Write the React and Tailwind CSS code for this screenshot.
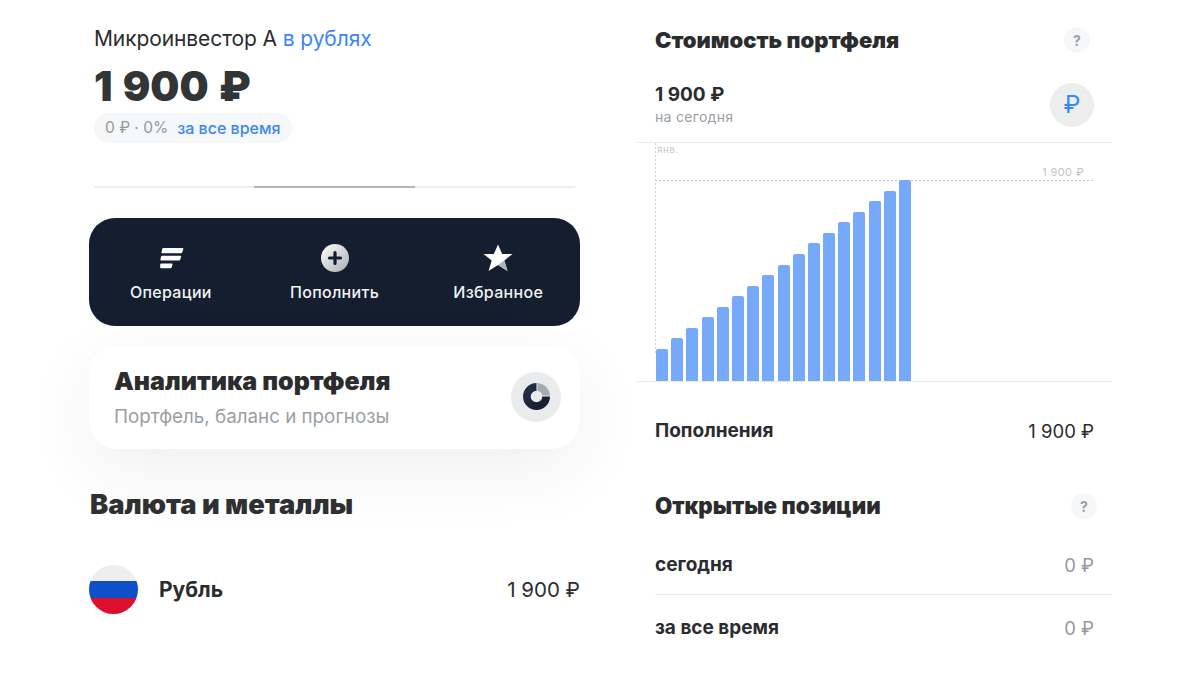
import React from 'react';

const bars = Array.from({ length: 17 }, (_, i) => 32 + i * 10.56);

function OpsIcon() {
  return (
    <svg width="24" height="24" viewBox="0 0 24 24" className="translate-x-[1px] translate-y-[1px]">
      <path d="M3.4 1H22.6Q23.6 1 23.3 2L22.3 5.2Q22 6.2 21 6.2H2.2Q1.2 6.2 1.5 5.2L2.2 2Q2.4 1 3.4 1Z" fill="#fff" />
      <path d="M2.2 8.8H20.4Q21.4 8.8 21.1 9.8L20.3 12.6Q20 13.6 19 13.6H1.2Q.2 13.6 .4 12.6L1 9.8Q1.2 8.8 2.2 8.8Z" fill="#fff" />
      <path d="M1.2 16.4H11.8Q12.8 16.4 12.5 17.4L11.7 20.2Q11.4 21.2 10.4 21.2H1Q0 21.2 .2 20.2L.2 17.6Q.3 16.4 1.2 16.4Z" fill="#fff" />
    </svg>
  );
}

function PlusIcon() {
  return (
    <svg width="28" height="28" viewBox="0 0 28 28">
      <defs>
        <linearGradient id="plusFill" x1="0" y1="0" x2="1" y2="1">
          <stop offset="0" stopColor="#ffffff" />
          <stop offset="1" stopColor="#a9adb3" />
        </linearGradient>
      </defs>
      <circle cx="14" cy="14" r="14" fill="url(#plusFill)" />
      <path d="M14 8.5V19.5M8.5 14H19.5" stroke="#141e2e" strokeWidth="3.2" strokeLinecap="round" />
    </svg>
  );
}

function StarIcon() {
  return (
    <svg width="30" height="28" viewBox="0 0 30 28">
      <path d="M15 .5L19.2 10H29.5L21.3 16.6L24.5 27L15 21L5.5 27L8.7 16.6L.5 10H10.8Z" fill="#fff" />
      <path d="M21.3 16.6L24.5 27L15 21Z" fill="#aeb2b8" />
    </svg>
  );
}

function DonutIcon() {
  return (
    <svg width="27" height="27" viewBox="0 0 28 28">
      <defs>
        <linearGradient id="donutFill" x1="0" y1="0" x2="1" y2="1">
          <stop offset="0" stopColor="#26344a" />
          <stop offset="1" stopColor="#121b2a" />
        </linearGradient>
      </defs>
      <path d="M15 0A14 14 0 0 1 28 13H20A6 6 0 0 0 15 8Z" fill="#a5abb1" />
      <path d="M14 0V8A6 6 0 1 0 20 14H28A14 14 0 1 1 14 0Z" fill="url(#donutFill)" />
    </svg>
  );
}

function Help({ className }) {
  return (
    <div className={`w-[26px] h-[26px] rounded-full bg-[#f6f7f8] flex items-center justify-center text-[14px] font-bold text-[#9a9ea5] ${className || ''}`}>?</div>
  );
}

function Action({ icon, label }) {
  return (
    <div className="flex flex-col items-center w-[164px]">
      <div className="h-[30px] flex items-center justify-center">{icon}</div>
      <div className="mt-[9px] text-[16px] leading-[20px] tracking-[0.3px] font-medium text-[#f1f2f4]">{label}</div>
    </div>
  );
}

function Row({ label, value, valueClass, className }) {
  return (
    <div className={`flex items-center justify-between ${className || ''}`}>
      <span className="text-[19px] leading-[24px] font-bold text-[#2b2c2e]">{label}</span>
      <span className={`text-[18.5px] leading-[24px] ${valueClass}`}>{value}</span>
    </div>
  );
}

export default function App() {
  return (
    <div className="w-[1200px] h-[675px] overflow-hidden bg-white flex font-['Inter',sans-serif] text-[#2b2c2e]">
      {/* left column */}
      <div className="w-[491px] ml-[89px] pt-[26px] flex flex-col">
        <div className="pl-[5px] text-[21px] leading-[26px] tracking-[-0.1px]">
          Микроинвестор А <span className="text-[#3d85f5]">в рублях</span>
        </div>
        <div className="pl-[5px] mt-[8px] text-[41px] leading-[52px] font-black text-[#333436] [word-spacing:2px]">1 900 ₽</div>
        <div className="ml-[5px] mt-[1px] w-[198px] h-[30px] rounded-full bg-[#f6f7f8] flex items-center pl-[11px] text-[15.5px]">
          <span className="text-[#94989e]">0 ₽ · 0%</span>
          <span className="ml-[9px] font-medium text-[#3d85f5] text-[16px]">за все время</span>
        </div>
        <div className="ml-[5px] mt-[43px] w-[481px] h-[2px] bg-[#efefef] flex">
          <div className="ml-[160px] w-[161px] bg-[#b5b6b8]"></div>
        </div>
        <div className="mt-[30px] h-[108px] rounded-[26px] bg-[#141e2e] flex justify-between pt-[25px]">
          <Action icon={<OpsIcon />} label="Операции" />
          <Action icon={<PlusIcon />} label="Пополнить" />
          <Action icon={<StarIcon />} label="Избранное" />
        </div>
        <div className="mt-[20px] h-[103px] rounded-[28px] bg-white shadow-[0_20px_70px_rgba(0,0,0,0.065)] flex items-center justify-between pl-[25px] pr-[19px]">
          <div>
            <div className="text-[25px] leading-[30px] font-black text-[#2b2c2e]">Аналитика портфеля</div>
            <div className="mt-[9px] text-[18.8px] leading-[24px] text-[#9a9ea5]">Портфель, баланс и прогнозы</div>
          </div>
          <div className="w-[50px] h-[50px] rounded-full bg-[#eaebed] flex items-center justify-center -translate-y-[1px]">
            <DonutIcon />
          </div>
        </div>
        <div className="relative mt-[39px] pl-[1px] text-[27.3px] leading-[34px] font-black text-[#2f3032]">Валюта и металлы</div>
        <div className="relative mt-[43px] flex items-center justify-between">
          <div className="flex items-center">
            <div className="w-[49px] h-[49px] rounded-full overflow-hidden flex flex-col">
              <div className="h-[16px] bg-[#eeeeef]"></div>
              <div className="h-[17px] bg-[#0f4fc9]"></div>
              <div className="h-[16px] bg-[#dd0f2d]"></div>
            </div>
            <span className="ml-[21px] text-[21px] leading-[26px] font-bold">Рубль</span>
          </div>
          <span className="text-[20.5px] leading-[26px]">1 900 ₽</span>
        </div>
      </div>

      {/* right column */}
      <div className="w-[475px] ml-[57px] flex flex-col">
        <div className="h-[80px] pt-[26px] pl-[18px] pr-[22px] flex items-start justify-between">
          <span className="text-[22px] leading-[28px] font-black">Стоимость портфеля</span>
          <Help className="mt-[1px]" />
        </div>
        <div className="h-[63px] pl-[18px] pr-[18px] flex justify-between border-b border-[#e9eaec]">
          <div>
            <div className="mt-[3px] text-[19px] leading-[24px] font-bold">1 900 ₽</div>
            <div className="mt-[1px] text-[14px] leading-[18px] tracking-[0.3px] text-[#9a9ea5]">на сегодня</div>
          </div>
          <div className="mt-[3px] w-[44px] h-[44px] rounded-full bg-[#eceded] flex items-center justify-center text-[24px] font-normal text-[#3d85f5]">₽</div>
        </div>
        <div className="relative h-[239px] border-b border-[#e9eaec]">
          <div className="absolute left-[18px] top-0 h-[210px] w-[1px] bg-[repeating-linear-gradient(180deg,#d4d5d7_0_2px,transparent_2px_4px)]"></div>
          <div className="absolute left-[18px] top-[37px] w-[439px] h-[1px] bg-[repeating-linear-gradient(90deg,#c4c5c7_0_2px,transparent_2px_4px)]"></div>
          <div className="absolute left-[20px] top-[0px] text-[10px] leading-[12px] tracking-[0.4px] text-[#c9cacc]">янв.</div>
          <div className="absolute right-[28px] top-[22px] text-[11px] leading-[14px] tracking-[0.4px] text-[#c4c5c7]">1 900 ₽</div>
          <div className="relative h-full pl-[19px] flex items-end gap-[3.2px]">
            {bars.map((h, i) => (
              <div key={i} className="w-[12px] bg-[#76a9fa] rounded-t-[2px]" style={{ height: h }}></div>
            ))}
          </div>
        </div>
        <Row className="mt-[37px] pl-[18px] pr-[18px]" label="Пополнения" value="1 900 ₽" valueClass="text-[#2b2c2e]" />
        <div className="mt-[50px] pl-[18px] pr-[15px] h-[26px] flex items-center justify-between">
          <span className="text-[22.3px] leading-[26px] font-black">Открытые позиции</span>
          <Help />
        </div>
        <Row className="mt-[34px] pl-[18px] pr-[18px]" label="сегодня" value="0 ₽" valueClass="text-[#94989e]" />
        <div className="mt-[17px] h-[1px] ml-[18px] bg-[#e9eaec]"></div>
        <Row className="mt-[21px] pl-[18px] pr-[18px]" label="за все время" value="0 ₽" valueClass="text-[#94989e]" />
      </div>
    </div>
  );
}
